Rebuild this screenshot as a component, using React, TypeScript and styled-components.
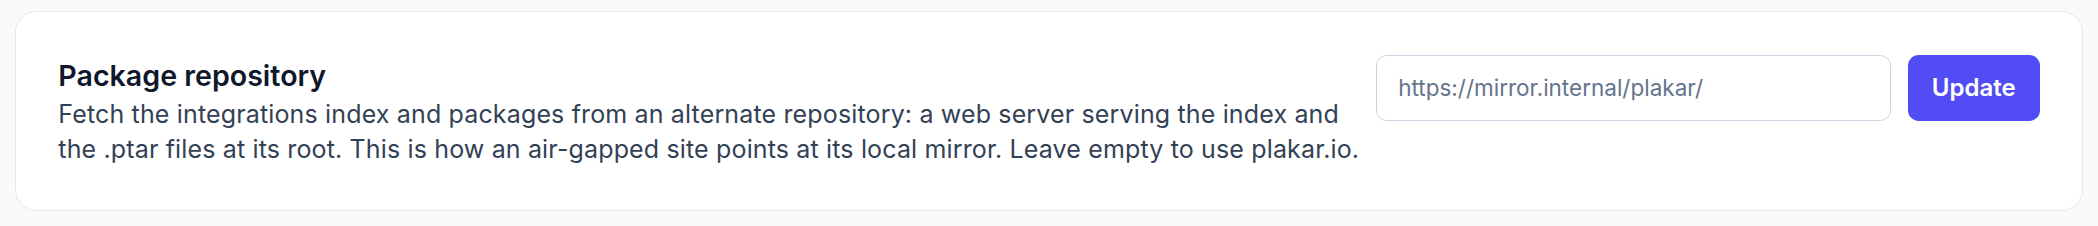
import React, { useState } from 'react';
import styled, { createGlobalStyle } from 'styled-components';

const GlobalStyle = createGlobalStyle`
  html, body {
    margin: 0;
    padding: 0;
    background: #f8fafc;
  }
  * {
    box-sizing: border-box;
  }
`;

const App = () => {
  const [repo, setRepo] = useState('https://mirror.internal/plakar/');
  return (
    <>
      <GlobalStyle />
      <Page>
        <Card>
          <TextColumn>
            <Title>Package repository</Title>
            <Description>
              Fetch the integrations index and packages from an alternate repository: a web server serving the index and
              the .ptar files at its root. This is how an air-gapped site points at its local mirror. Leave empty to use
              plakar.io.
            </Description>
          </TextColumn>
          <Controls>
            <RepoInput value={repo} onChange={(e) => setRepo(e.target.value)} placeholder="https://plakar.io/" />
            <UpdateButton type="button">Update</UpdateButton>
          </Controls>
        </Card>
      </Page>
    </>
  );
};

const Page = styled.div`
  padding: 11px 14.67px 15px;
  font-family: Inter, 'Noto Sans', sans-serif;
`;

const Card = styled.div`
  display: flex;
  align-items: flex-start;
  gap: 16px;
  background: #ffffff;
  border: 1.33px solid #e2e8f0;
  border-radius: 21.33px;
  padding: 42.67px;
  height: 200px;
`;

const TextColumn = styled.div`
  flex: 1;
  min-width: 0;
`;

const Title = styled.h2`
  margin: 0;
  font-size: 28.6px;
  line-height: 42px;
  font-weight: 600;
  color: #0f172a;
`;

const Description = styled.p`
  margin: 0;
  font-size: 25px;
  line-height: 35px;
  letter-spacing: 0.15px;
  color: #334155;
`;

const Controls = styled.div`
  display: flex;
  align-items: center;
  gap: 17px;
`;

const RepoInput = styled.input`
  width: 515px;
  height: 66px;
  padding: 0 21.33px;
  border: 1.33px solid #cbd5e1;
  border-radius: 10.67px;
  font-family: Inter, 'Noto Sans', sans-serif;
  font-size: 22.5px;
  color: #64748b;
  background: #ffffff;
  outline: none;
`;

const UpdateButton = styled.button`
  height: 66px;
  padding: 0 24px;
  border: none;
  border-radius: 10.67px;
  background: #524cf5;
  color: #ffffff;
  font-family: Inter, 'Noto Sans', sans-serif;
  font-size: 24px;
  font-weight: 600;
  cursor: pointer;
`;

export default App;
